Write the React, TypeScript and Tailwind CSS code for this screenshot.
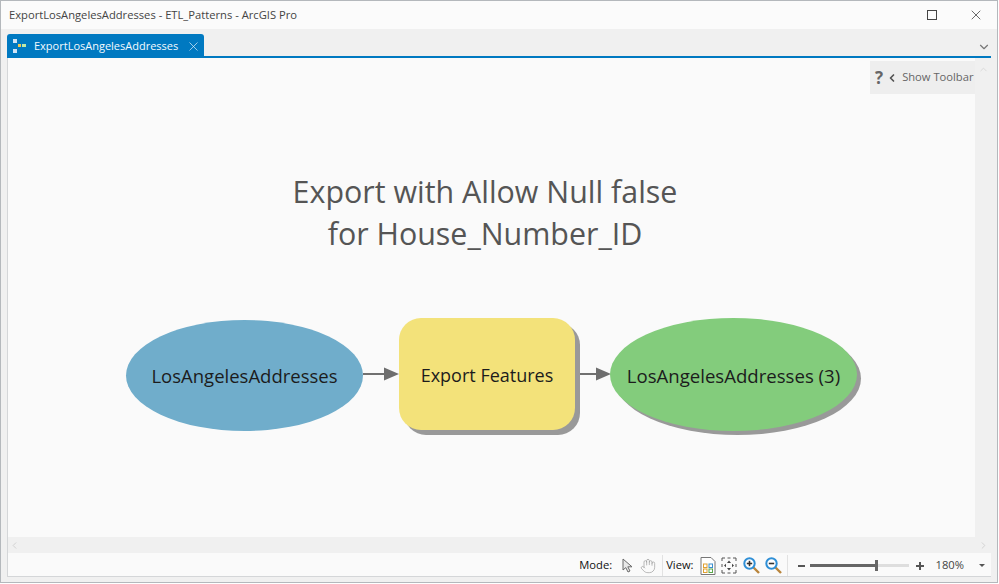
import { X, ChevronDown, ChevronUp, ChevronLeft, ChevronRight, Hand } from 'lucide-react';

const font = "font-['Open_Sans',sans-serif]";

function Arrow({ className, width }: { className: string; width: number }) {
  return (
    <svg className={className} width={width} height="14" viewBox={`0 0 ${width} 14`}>
      <path d={`M0 7H${width - 14}`} stroke="#707070" strokeWidth="2" />
      <path d={`M${width - 15} 0.5L${width} 7L${width - 15} 13.5Z`} fill="#6e6e6e" />
    </svg>
  );
}

function ModelIcon() {
  return (
    <svg width="16" height="16" viewBox="0 0 16 16">
      <rect x="1" y="1" width="4" height="4" fill="#cfe3f5" />
      <rect x="1" y="11" width="4" height="4" fill="#cfe3f5" />
      <rect x="6" y="6" width="3" height="3" fill="#f3c94f" />
      <rect x="10" y="6" width="4" height="3" fill="#bfe8a8" />
    </svg>
  );
}

function PointerIcon() {
  return (
    <svg width="11" height="15" viewBox="0 0 11 15" fill="none">
      <path d="M1 1V12L3.8 9.6L6 14L8 13L5.8 8.8H10Z" stroke="#6a6a6a" fill="#e8e8e8" />
    </svg>
  );
}

function FitIcon() {
  return (
    <svg width="16" height="17" viewBox="0 0 16 17" fill="none">
      <path d="M1 4V1H4M12 1H15V4M15 13V16H12M4 16H1V13M6.5 1H9.5M6.5 16H9.5M1 7V10M15 7V10" stroke="#555" />
      <path d="M8 3.5L10 6H6ZM8 13.5L10 11H6ZM3 8.5L5 6.8V10.2ZM13 8.5L11 6.8V10.2Z" fill="#444" />
    </svg>
  );
}

function PageIcon() {
  return (
    <svg width="16" height="18" viewBox="0 0 16 18" fill="none">
      <path d="M1 .5H11L15 4.5V17.5H1Z" stroke="#777" fill="#fff" />
      <rect x="3.5" y="7" width="3.5" height="3.5" stroke="#e0a030" />
      <rect x="9" y="7" width="3.5" height="3.5" stroke="#3b8fd0" />
      <rect x="3.5" y="12" width="3.5" height="3.5" stroke="#e0a030" />
      <rect x="9" y="12" width="3.5" height="3.5" stroke="#5aa84a" />
    </svg>
  );
}

function ZoomIcon({ plus }: { plus: boolean }) {
  return (
    <svg width="17" height="17" viewBox="0 0 17 17" fill="none">
      <path d="M10.5 10.5L16 16" stroke="#b9853c" strokeWidth="2.4" />
      <circle cx="6.5" cy="6.5" r="5.2" stroke="#2f8fd6" strokeWidth="2" fill="#fff" />
      <path d="M3.8 6.5H9.2" stroke="#333" strokeWidth="1.6" />
      {plus && <path d="M6.5 3.8V9.2" stroke="#333" strokeWidth="1.6" />}
    </svg>
  );
}

export default function App() {
  return (
    <div className={`${font} h-[584px] w-[999px] overflow-hidden bg-white`}>
      <div className="flex h-[583px] w-[998px] flex-col border border-[#b4b8bc] bg-[#f0f0f0]">
        <div className="flex h-[28px] shrink-0 items-center justify-between bg-[#fbfbfb] pl-[8px]">
          <span className="text-[11.2px] text-[#444]">ExportLosAngelesAddresses - ETL_Patterns - ArcGIS Pro</span>
          <div className="flex items-center gap-[31px] pr-[13px]">
            <div className="h-[10px] w-[10px] border border-[#444]" />
            <X size={16} strokeWidth={1.1} className="text-[#333]" />
          </div>
        </div>

        <div className="mx-[6px] flex h-[29px] shrink-0 items-end justify-between border-b-2 border-[#0079c1]">
          <div className="flex h-[22px] w-[197px] items-center rounded-t-[3px] bg-[#0079c1] pt-[2px] pl-[5px] text-white">
            <ModelIcon />
            <span className="ml-[6px] text-[11px] text-[#f4fafe]">ExportLosAngelesAddresses</span>
            <X size={15} strokeWidth={1.1} className="ml-[8px] text-[#e4f1fa]" />
          </div>
          <ChevronDown size={14} className="mb-[2px] text-[#777]" />
        </div>

        <div className="mx-[6px] flex min-h-0 flex-1 flex-col border-b border-l border-[#d4d6d8] bg-[#fafafa]">
          <div className="flex min-h-0 flex-1">
            <div className="relative flex-1 overflow-hidden bg-[#fafafa]">
              <div className="absolute top-[3px] right-0 flex h-[33px] w-[105px] items-center overflow-hidden bg-[#eeeeee] pl-[5px] text-[#666]">
                <span className="text-[17px] leading-none font-bold text-[#666]">?</span>
                <ChevronLeft size={12} strokeWidth={3.4} className="ml-[3px] text-[#555]" />
                <span className="ml-[4px] text-[11.2px] whitespace-nowrap">Show Toolbar</span>
              </div>

              <div className="absolute top-[113px] left-0 w-[954px] text-center text-[30.4px] leading-[42px] text-[#555]">
                <div>Export with Allow Null false</div>
                <div>for House_Number_ID</div>
              </div>

              <div className="absolute top-[262px] left-[118px] flex h-[111px] w-[237px] items-center justify-center rounded-[50%] bg-[#70adcb] pt-[1px] text-[18.5px] text-[#1c1c1c]">
                LosAngelesAddresses
              </div>
              <Arrow width={36} className="absolute top-[309px] left-[355px]" />
              <div className="absolute top-[260px] left-[391px] flex h-[112px] w-[176px] items-center justify-center rounded-[22px] bg-[#f3e27a] pt-[3px] text-[18px] text-[#1c1c1c] shadow-[5px_5px_0_#999999]">
                Export Features
              </div>
              <Arrow width={31} className="absolute top-[309px] left-[572px]" />
              <div className="absolute top-[260px] left-[602px] flex h-[113px] w-[247px] items-center justify-center rounded-[50%] bg-[#83cc7c] pt-[3px] text-[18.6px] text-[#1c1c1c] shadow-[4px_4px_0_#999999]">
                LosAngelesAddresses (3)
              </div>
            </div>
            <div className="flex w-[16px] shrink-0 justify-center bg-[#f0f0f0] pt-[6px]">
              <ChevronUp size={11} className="text-[#d8d8d8]" />
            </div>
          </div>

          <div className="flex h-[16px] shrink-0 items-center justify-between bg-[#f0f0f0] pr-[2px] pl-[1px]">
            <ChevronLeft size={11} className="text-[#cfcfcf]" />
            <ChevronRight size={11} className="text-[#cfcfcf]" />
          </div>

          <div className="flex h-[23px] shrink-0 items-center justify-end bg-[#fafafa] pt-[2px] text-[11.2px] text-[#111]">
            <span className="font-medium">Mode:</span>
            <div className="ml-[10px]"><PointerIcon /></div>
            <Hand size={16} strokeWidth={1} className="ml-[7px] text-[#999]" />
            <div className="ml-[6px] h-[21px] w-px bg-[#e2e2e2]" />
            <span className="ml-[3px] font-medium">View:</span>
            <div className="ml-[6px]"><PageIcon /></div>
            <div className="ml-[5px]"><FitIcon /></div>
            <div className="ml-[6px]"><ZoomIcon plus /></div>
            <div className="ml-[5px]"><ZoomIcon plus={false} /></div>
            <div className="ml-[5px] h-[21px] w-px bg-[#e2e2e2]" />
            <div className="ml-[10px] h-[2px] w-[7px] bg-[#555]" />
            <div className="ml-[5px] flex h-[3px] w-[99px] items-center bg-[#dedede]">
              <div className="h-[3px] w-[65px] bg-[#666]" />
              <div className="h-[11px] w-[3px] bg-[#666]" />
            </div>
            <div className="relative ml-[7px] h-[8px] w-[8px]">
              <div className="absolute top-[3px] left-0 h-[2px] w-[8px] bg-[#555]" />
              <div className="absolute top-0 left-[3px] h-[8px] w-[2px] bg-[#555]" />
            </div>
            <span className="ml-[12px] text-[#444]">180%</span>
            <div className="mr-[6px] ml-[15px] h-0 w-0 border-x-[3px] border-t-[3px] border-x-transparent border-t-[#555]" />
          </div>
        </div>
        <div className="h-[5px] shrink-0 bg-[#f0f0f0]" />
      </div>
    </div>
  );
}
